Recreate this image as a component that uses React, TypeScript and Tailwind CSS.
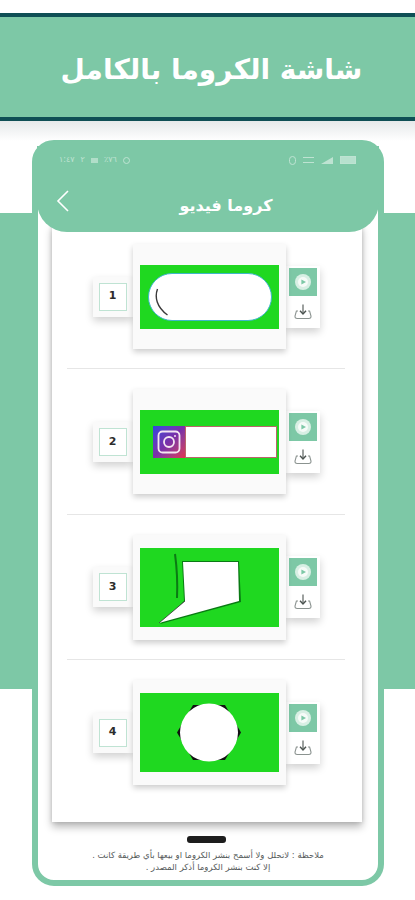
import React from 'react';

const arabicFont = "font-['DejaVu_Sans',sans-serif]";

const PlayBadge = () => (
  <div className="w-[28px] h-[28px] bg-[#7dc8a6] flex items-center justify-center">
    <svg width="18" height="18" viewBox="0 0 18 18">
      <circle cx="9" cy="9" r="8" fill="#d8efe4" />
      <circle cx="9" cy="9" r="5" fill="#f6fbf8" />
      <path d="M7.4 6.4 L12 9 L7.4 11.6 Z" fill="#7dc8a6" />
    </svg>
  </div>
);

const DownloadIcon = () => (
  <svg width="20" height="18" viewBox="0 0 20 18" fill="none" stroke="#6b7471" strokeWidth="1.1">
    <path d="M10 1.5 V10.5" stroke="#4b5350" />
    <path d="M7 7.8 L10 11 L13 7.8" stroke="#4b5350" strokeWidth="1.4" />
    <path d="M5 8 H3.4 L2 13 Q1.8 15.5 4.2 15.5 H15.8 Q18.2 15.5 18 13 L16.6 8 H15" stroke="#8b9390" />
  </svg>
);

const Pill = () => (
  <div className="relative ml-[1px] w-[124px] h-[48px] rounded-full bg-white border border-[#3fb6c9]">
    <svg className="absolute left-[6px] top-[14px]" width="14" height="28" viewBox="0 0 14 28" fill="none">
      <path d="M2.5 1 C-0.5 9 1.5 19 12.5 27" stroke="#3a3a3a" strokeWidth="1.4" />
    </svg>
  </div>
);

const InstagramBar = () => (
  <div className="flex w-[124px] h-[32px] ml-[13px] -mr-[11px] self-center">
    <div className="w-[32px] h-[32px] shrink-0 bg-gradient-to-br from-[#2b45e0] via-[#7a2fa8] to-[#e0304f] flex items-center justify-center">
      <svg width="24" height="24" viewBox="0 0 24 24" fill="none" stroke="#f4e6f2" strokeWidth="1.8">
        <rect x="1.5" y="1.5" width="21" height="21" rx="4" />
        <circle cx="12" cy="12" r="5" />
        <circle cx="18" cy="6" r="1" fill="#f4e6f2" stroke="none" />
      </svg>
    </div>
    <div className="flex-1 bg-white border border-[#b9666a]" />
  </div>
);

const Bubble = () => (
  <svg width="139" height="79" viewBox="0 0 139 79" className="block">
    <path d="M35 6 Q38 28 37 50" stroke="#0b7a14" strokeWidth="2" fill="none" />
    <path d="M42 13 H99 L101 54 L20 76 L44 53 Z" fill="#0a7a14" />
    <path d="M43 14 H98 L99 53 L19 75 L45 53 Z" fill="#ffffff" />
    <path d="M19 75 L45 53" stroke="#333" strokeWidth="0.8" />
  </svg>
);

const Circle = () => (
  <svg width="139" height="79" viewBox="0 0 139 79" className="block">
    <path d="M53 12 L85 12 L101 39.5 L85 67 L53 67 L37 39.5 Z" fill="#111" />
    <circle cx="69" cy="39.5" r="29" fill="#ffffff" />
  </svg>
);

const rows = [
  { n: '1', h: 'h-[64px]', art: <Pill />, center: true },
  { n: '2', h: 'h-[64px]', art: <InstagramBar />, center: false },
  { n: '3', h: 'h-[79px]', art: <Bubble />, center: true },
  { n: '4', h: 'h-[79px]', art: <Circle />, center: true },
];

export default function App() {
  return (
    <div className="relative w-[415px] h-[900px] overflow-hidden bg-white pt-[13px]">
      {/* band running behind the phone */}
      <div className="absolute left-0 right-0 top-[213px] h-[476px] bg-[#7dc8a6]" />

      <header className="relative h-[108px] bg-[#7dc8a6] border-y-[4px] border-[#0f4f55] flex items-center justify-center pl-[8px] pt-[6px]">
        <h1 dir="rtl" className={`${arabicFont} text-white text-[28px] font-bold leading-none`}>
          شاشة الكروما بالكامل
        </h1>
      </header>
      <div className="absolute left-0 right-0 top-[121px] h-[20px] bg-gradient-to-b from-[#e6e9ea] to-white" />

      <div className="relative mx-[32px] mt-[19px] w-[352px] h-[746px] rounded-[22px] border-[6px] border-[#7dc8a6] bg-white flex flex-col">
        <div className="relative z-10 -mx-px h-[86px] bg-[#7dc8a6] rounded-b-[30px] shrink-0">
          <div className="flex items-center justify-between pl-[22px] pr-[23px] h-[28px] opacity-50">
            <div className="flex items-center gap-[6px] text-white text-[8px] leading-none font-['DejaVu_Sans',sans-serif]">
              <span>١:٤٧</span>
              <span>٢</span>
              <span className="w-[7px] h-[5px] bg-white/80" />
              <span>٪٧٦</span>
              <span className="w-[7px] h-[7px] rounded-full border border-white" />
            </div>
            <div className="flex items-center gap-[7px]">
              <span className="w-[7px] h-[9px] rounded-full border border-white" />
              <span className="w-[11px] h-[6px] border-t border-b border-white" />
              <svg width="12" height="7" viewBox="0 0 12 7"><path d="M0 7 L12 0 V7 Z" fill="#fff" /></svg>
              <span className="w-[16px] h-[8px] bg-white/90 border border-white" />
            </div>
          </div>
          <div className="relative h-[50px] pt-[14px] pl-[36px] flex items-center justify-center">
            <svg className="absolute left-[19px] top-[15px]" width="14" height="24" viewBox="0 0 14 24" fill="none" stroke="#fff" strokeWidth="1.6">
              <path d="M12 2 L2 12 L12 22" />
            </svg>
            <span dir="rtl" className={`${arabicFont} text-white text-[16px] font-bold leading-none`}>
              كروما فيديو
            </span>
          </div>
        </div>

        <div className="mx-[14px] -mt-[8px] w-[310px] h-[598px] shrink-0 bg-white shadow-[0_5px_8px_rgba(0,0,0,0.28),0_0_4px_rgba(0,0,0,0.14)]">
          {rows.map((row, i) => (
            <div key={row.n} className="relative h-[145.33px] flex items-center justify-center">
              <div className="flex items-center -translate-x-[1px]">
                <div className="w-[40px] h-[40px] bg-[#fafafa] flex items-center justify-center shadow-[0_4px_8px_rgba(0,0,0,0.18)]">
                  <div className="w-[28px] h-[28px] bg-white border border-[#bfe3d3] flex items-center justify-center text-[11px] font-bold text-[#2c2c2c] font-['DejaVu_Sans',sans-serif]">
                    {row.n}
                  </div>
                </div>
                <div className="relative z-[1] w-[153px] h-[105px] bg-[#fafafa] flex items-center justify-center shadow-[0_3px_6px_rgba(0,0,0,0.2)]">
                  <div className={`w-[139px] ${row.h} bg-[#1fd820] flex items-center ${row.center ? 'justify-center' : ''} overflow-hidden`}>
                    {row.art}
                  </div>
                </div>
                <div className="w-[34px] h-[62px] bg-white pt-[2px] flex flex-col items-center shadow-[0_4px_8px_rgba(0,0,0,0.18)]">
                  <PlayBadge />
                  <div className="flex-1 flex items-center justify-center">
                    <DownloadIcon />
                  </div>
                </div>
              </div>
              {i < rows.length - 1 && <div className="absolute left-[15px] right-[17px] bottom-0 h-px bg-[#e6e6e6]" />}
            </div>
          ))}
        </div>

        <div className="flex-1 flex flex-col items-center">
          <span className="mt-[14px] -ml-[4px] w-[39px] h-[7px] rounded-[3px] bg-[#1d1d1d]" />
          <p dir="rtl" className={`${arabicFont} mt-[6px] text-center text-[8.5px] leading-[12px] text-[#555a5a]`}>
            ملاحظة : لاتحلل ولا أسمح بنشر الكروما او بيعها بأي طريقة كانت .
            <br />
            إلا كنت بنشر الكروما أذكر المصدر .
          </p>
        </div>
      </div>
    </div>
  );
}
